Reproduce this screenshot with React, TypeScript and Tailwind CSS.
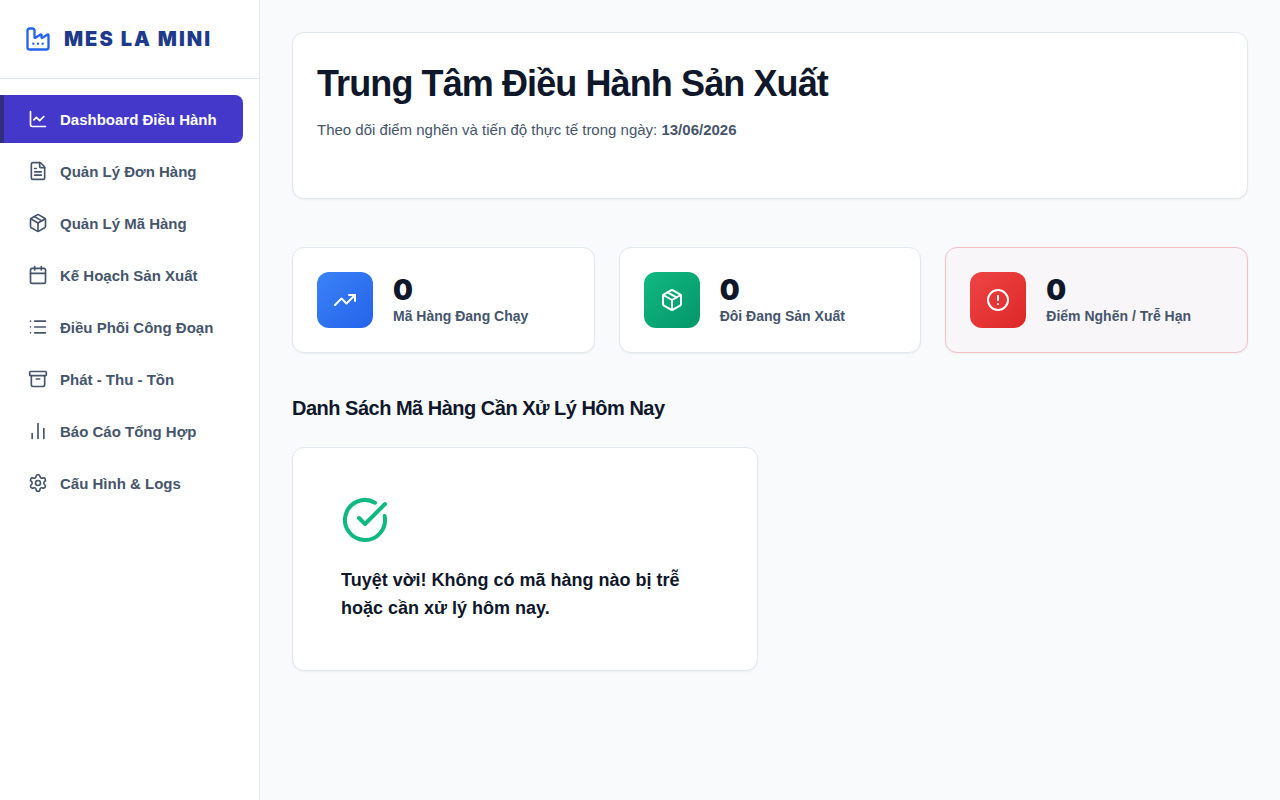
import React from "react";
import {
  Archive,
  Calendar,
  ChartLine,
  ChartNoAxesColumn,
  CircleAlert,
  CircleCheckBig,
  Factory,
  FileText,
  List,
  Package,
  Settings,
  TrendingUp,
} from "lucide-react";

const menu = [
  { label: "Dashboard Điều Hành", icon: ChartLine, active: true },
  { label: "Quản Lý Đơn Hàng", icon: FileText },
  { label: "Quản Lý Mã Hàng", icon: Package },
  { label: "Kế Hoạch Sản Xuất", icon: Calendar },
  { label: "Điều Phối Công Đoạn", icon: List },
  { label: "Phát - Thu - Tồn", icon: Archive },
  { label: "Báo Cáo Tổng Hợp", icon: ChartNoAxesColumn },
  { label: "Cấu Hình & Logs", icon: Settings },
];

const stats = [
  {
    label: "Mã Hàng Đang Chạy",
    value: 0,
    icon: TrendingUp,
    card: "bg-white border-slate-200",
    tile: "from-[#3b82f6] to-[#2563eb]",
  },
  {
    label: "Đôi Đang Sản Xuất",
    value: 0,
    icon: Package,
    card: "bg-white border-slate-200",
    tile: "from-[#10b981] to-[#059669]",
  },
  {
    label: "Điểm Nghẽn / Trễ Hạn",
    value: 0,
    icon: CircleAlert,
    card: "bg-[#f9f6f9] border-[#f6bfc1]",
    tile: "from-[#ef4444] to-[#dc2626]",
  },
];

const Sidebar = () => (
  <aside className="w-65 shrink-0 bg-white border-r border-slate-200">
    {/* Logo */}
    <div className="flex items-center gap-3 px-6 py-6 border-b border-slate-200">
      <Factory size={28} className="text-[#2563eb]" />
      <span className="text-xl leading-[30px] font-black font-['Inter',sans-serif] text-[#1e3a8a] tracking-widest">
        MES LA MINI
      </span>
    </div>
    {/* Menu */}
    <nav className="flex flex-col gap-1 py-4 pr-4">
      {menu.map(({ label, icon: Icon, active }) => (
        <a
          key={label}
          href="#"
          className={
            active
              ? "flex items-center gap-3 h-12 pl-6 border-l-4 border-[#312e81] rounded-r-lg bg-[#4338ca] text-white text-[15px] leading-[25px] font-semibold"
              : "flex items-center gap-3 h-12 pl-6 border-l-4 border-transparent rounded-r-lg text-slate-600 text-[15px] leading-[25px] font-semibold"
          }
        >
          <Icon size={20} />
          <span>{label}</span>
        </a>
      ))}
    </nav>
  </aside>
);

const App = () => {
  return (
    <div className="flex min-h-screen bg-[#f8fafc] text-slate-900 font-['Liberation_Sans',sans-serif]">
      <Sidebar />
      <main className="flex-1 min-w-0 p-8">
        {/* Header */}
        <header className="bg-white border border-slate-200 rounded-xl shadow-xs px-6 pt-6 pb-14 mb-12">
          <h1 className="text-4xl leading-[53px] font-bold tracking-tight">
            Trung Tâm Điều Hành Sản Xuất
          </h1>
          <p className="mt-2 text-[15px] leading-6 text-slate-600">
            Theo dõi điểm nghẽn và tiến độ thực tế trong ngày:{" "}
            <strong>13/06/2026</strong>
          </p>
        </header>

        {/* Stats */}
        <section className="grid grid-cols-3 gap-6 mb-10">
          {stats.map(({ label, value, icon: Icon, card, tile }) => (
            <div
              key={label}
              className={`flex items-center gap-5 p-6 border rounded-xl shadow-xs ${card}`}
            >
              <div
                className={`flex items-center justify-center size-14 shrink-0 rounded-xl bg-linear-135 text-white ${tile}`}
              >
                <Icon size={24} />
              </div>
              <div>
                <div className="text-[28px] leading-8 font-black font-['Inter',sans-serif]">
                  {value}
                </div>
                <div className="text-sm leading-5 font-semibold text-slate-600">
                  {label}
                </div>
              </div>
            </div>
          ))}
        </section>

        {/* Danh sách */}
        <h2 className="text-xl leading-[30px] font-bold tracking-tight mb-6">
          Danh Sách Mã Hàng Cần Xử Lý Hôm Nay
        </h2>
        <div className="grid grid-cols-2 gap-6">
          <div className="bg-white border border-slate-200 rounded-xl shadow-xs p-12">
            <CircleCheckBig size={48} className="text-[#10b981]" />
            <h3 className="mt-[22px] text-lg leading-7 font-bold">
              Tuyệt vời! Không có mã hàng nào bị trễ hoặc cần xử lý hôm nay.
            </h3>
          </div>
        </div>
      </main>
    </div>
  );
};

export default App;
